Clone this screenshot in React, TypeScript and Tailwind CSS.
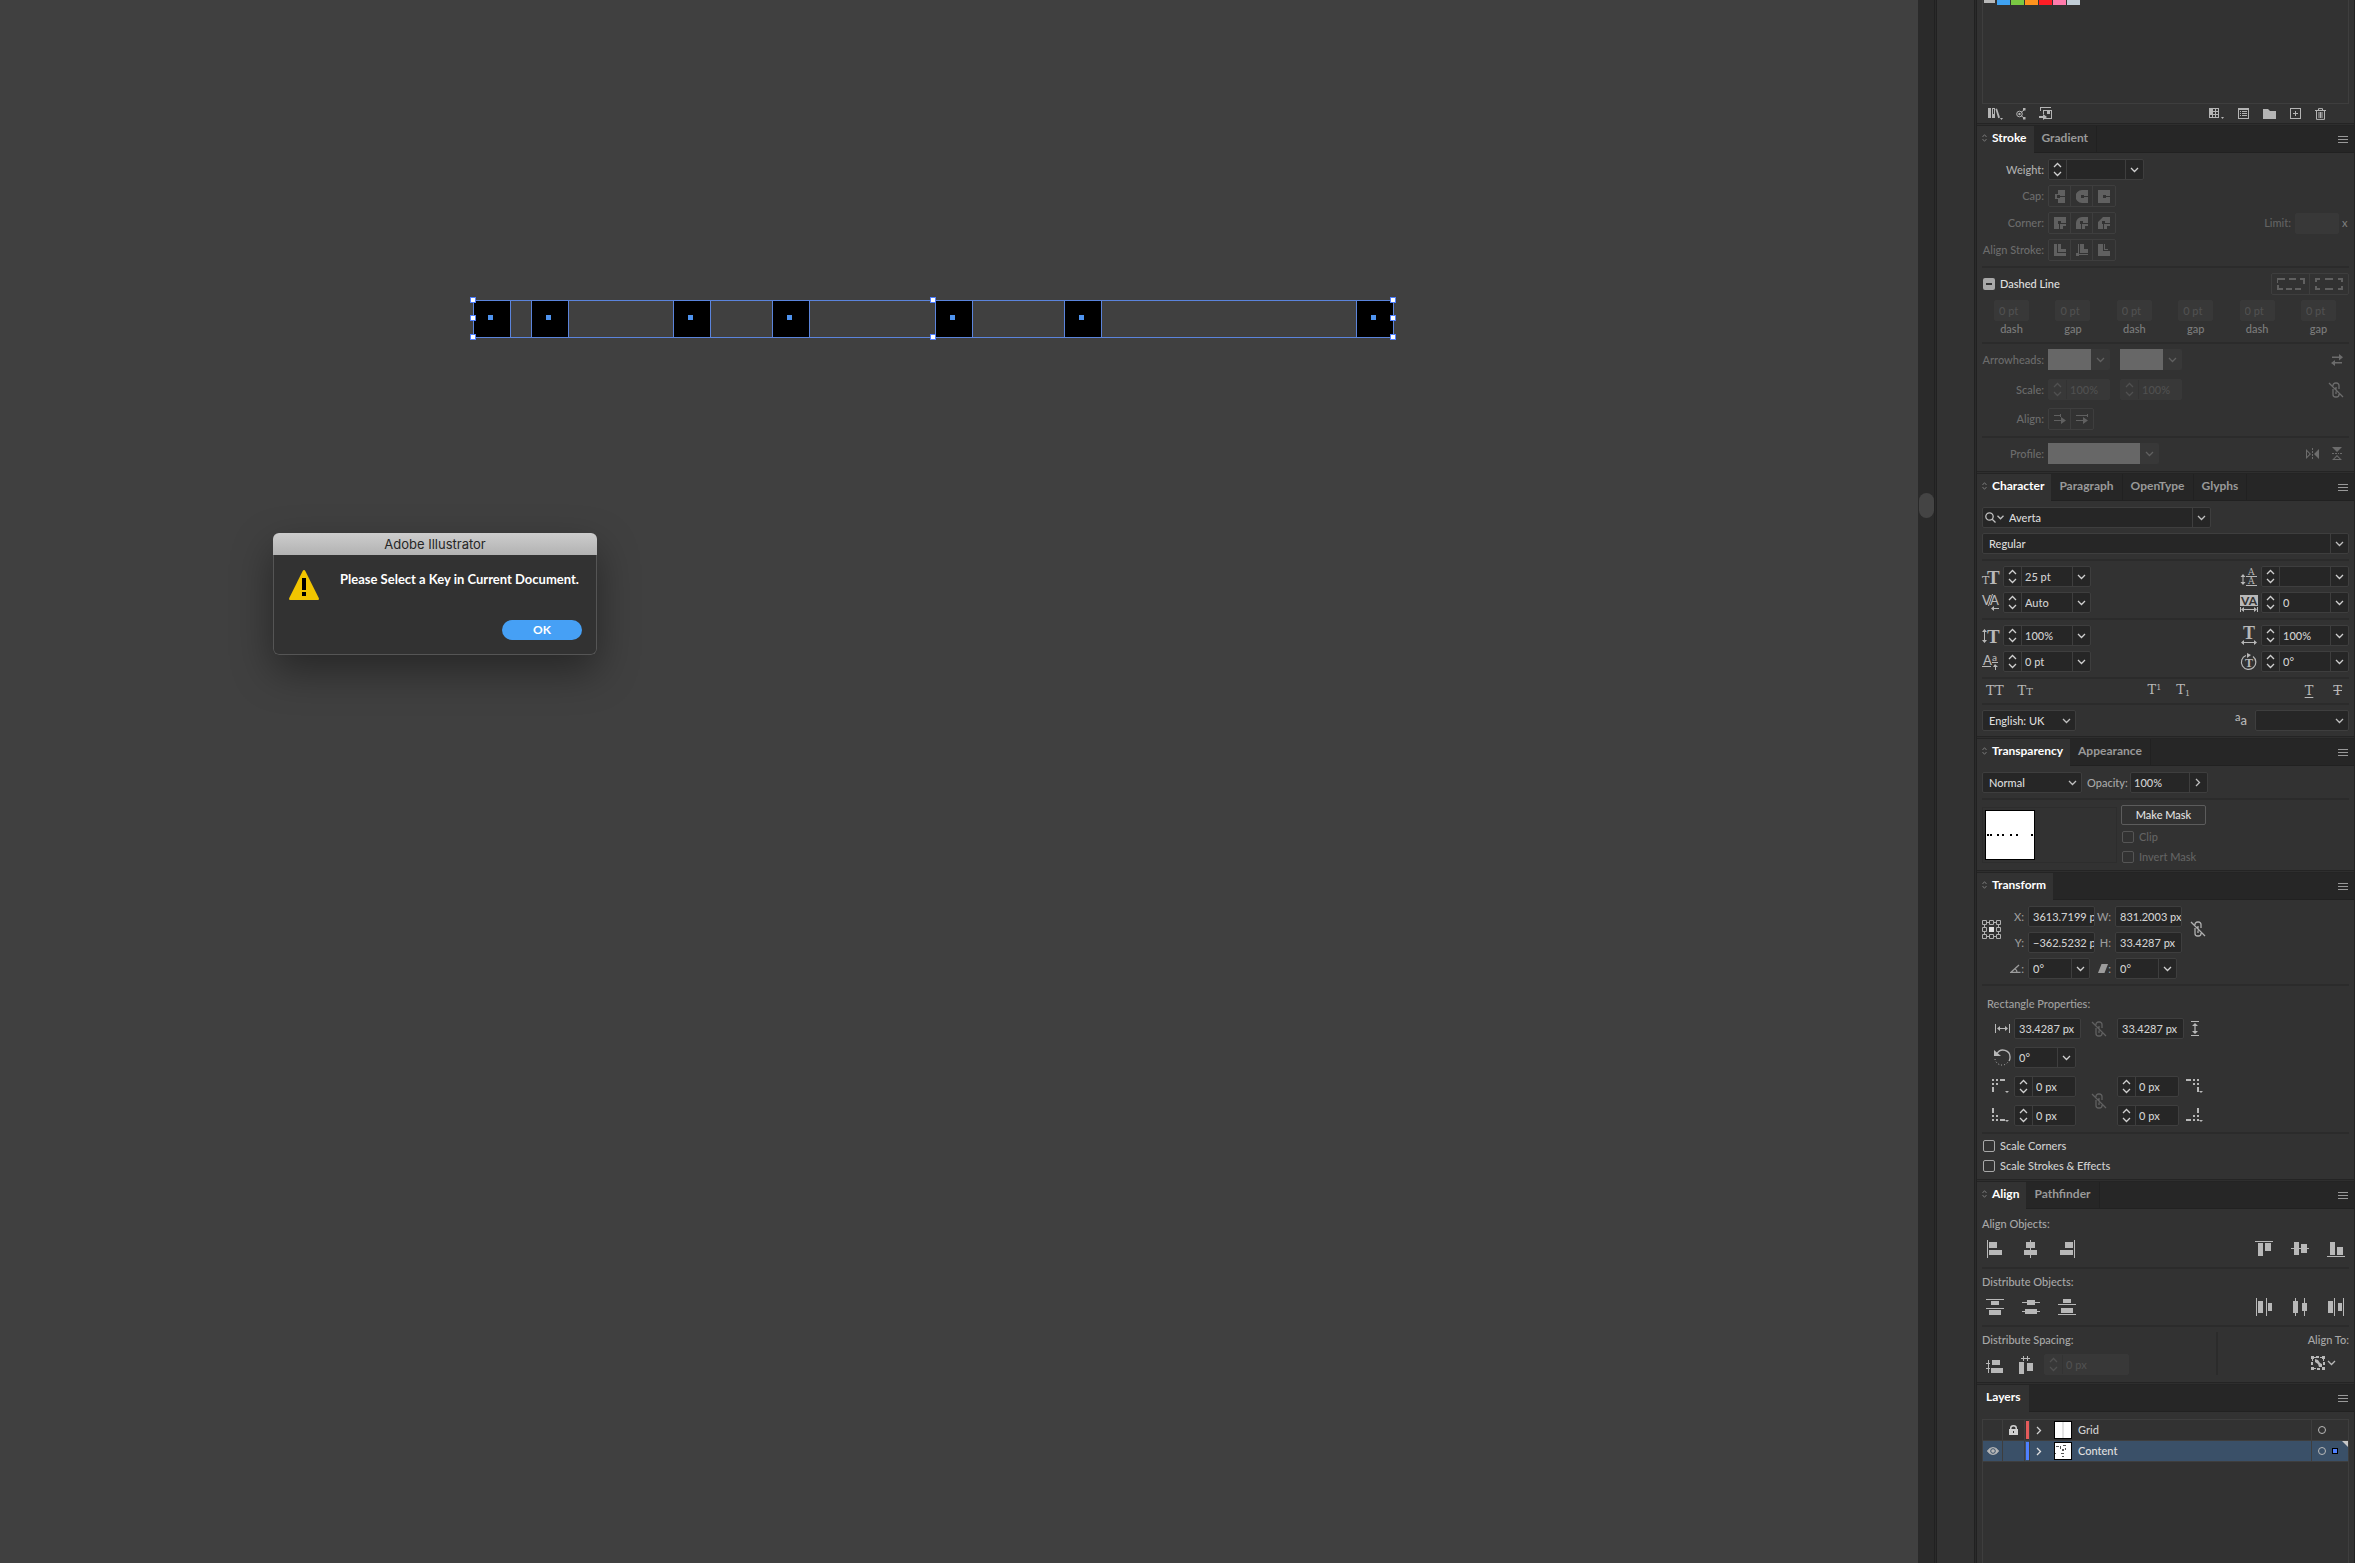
import React from 'react';
import clsx from 'clsx';

const keyPositions = [473, 531, 673, 772, 935, 1064, 1356];
const dotPositions = [488, 546, 688, 787, 950, 1079, 1371];
const handles = [
  [470, 297],
  [470, 315],
  [470, 334],
  [930, 297],
  [930, 334],
  [1390, 297],
  [1390, 315],
  [1390, 334],
];

function Shape({ w, h, d, className }: { w: number; h: number; d: string; className?: string }) {
  return (
    <svg width={w} height={h} viewBox={`0 0 ${w} ${h}`} className={clsx('shrink-0', className)} fill="currentColor">
      <path d={d} />
    </svg>
  );
}

function Line({ w, h, d, className }: { w: number; h: number; d: string; className?: string }) {
  return (
    <svg
      width={w}
      height={h}
      viewBox={`0 0 ${w} ${h}`}
      className={clsx('shrink-0', className)}
      fill="none"
      stroke="currentColor"
      strokeWidth="1.3"
    >
      <path d={d} />
    </svg>
  );
}

const ChevronDown = ({ className }: { className?: string }) => (
  <Line w={9} h={6} d="M1 1l3.5 3.5L8 1" className={className} />
);

function IconButton({ label, children, className }: { label: string; children: React.ReactNode; className?: string }) {
  return (
    <button aria-label={label} className={clsx('flex shrink-0 items-center justify-center', className)}>
      {children}
    </button>
  );
}

function Divider() {
  return <hr className="my-[5px] h-[2px] border-0 bg-[#2b2b2b]" />;
}

interface FieldProps {
  id?: string;
  label?: string;
  value?: string;
  width: string;
  stepper?: boolean;
  drop?: boolean;
  disabled?: boolean;
}

function Field({ id, label, value = '', width, stepper, drop, disabled }: FieldProps) {
  const line = disabled ? 'border-[#333333]' : 'border-[#3e3e3e]';
  return (
    <div
      className={clsx(
        'flex h-[21px] shrink-0 overflow-hidden rounded-xs border',
        width,
        disabled ? 'border-[#383838] bg-[#383838] text-[#505050]' : 'border-[#3e3e3e] bg-[#262626] text-[#d0d0d0]'
      )}
    >
      {stepper && (
        <div className={clsx('flex w-[18px] shrink-0 flex-col items-center justify-between border-r py-[2px]', line)}>
          <button aria-label="Increase" disabled={disabled}>
            <Line w={9} h={6} d="M1 5l3.5-3.5L8 5" className="block" />
          </button>
          <button aria-label="Decrease" disabled={disabled}>
            <ChevronDown className="block" />
          </button>
        </div>
      )}
      <input
        id={id}
        aria-label={label}
        defaultValue={value}
        disabled={disabled}
        className={clsx('min-w-0 flex-1 bg-transparent outline-none', stepper ? 'pl-[3px]' : 'pl-1')}
      />
      {drop && (
        <button
          aria-label="Show options"
          disabled={disabled}
          className={clsx('flex w-[18px] shrink-0 items-center justify-center border-l pr-px', line)}
        >
          <ChevronDown />
        </button>
      )}
    </div>
  );
}

function Select({ id, label, value, width, split }: { id?: string; label?: string; value: string; width: string; split?: boolean }) {
  return (
    <div className={clsx('relative flex h-[21px] shrink-0 rounded-xs border border-[#3e3e3e] bg-[#262626]', width)}>
      <select id={id} aria-label={label} className="w-full appearance-none bg-transparent pl-1.5 text-[#dcdcdc] outline-none">
        <option>{value}</option>
      </select>
      <span
        className={clsx(
          'pointer-events-none absolute inset-y-0 right-0 flex w-[18px] items-center justify-center',
          split && 'border-l border-[#3e3e3e]'
        )}
      >
        <ChevronDown />
      </span>
    </div>
  );
}

// Disabled preview menus: a flat swatch with a dim arrow beside it
function PreviewSelect({ id, label, width }: { id?: string; label?: string; width: string }) {
  return (
    <div className={clsx('relative h-[21px] shrink-0 rounded-xs bg-[#383838] pr-[19px] text-[#606060]', width)}>
      <select id={id} aria-label={label} disabled className="block h-full w-full appearance-none bg-[#676767]">
        <option></option>
      </select>
      <ChevronDown className="pointer-events-none absolute top-2 right-[5px]" />
    </div>
  );
}

function Checkbox({ id, label, disabled }: { id: string; label: string; disabled?: boolean }) {
  return (
    <label
      htmlFor={id}
      className={clsx('flex h-3 items-center gap-[5px] pl-px', disabled ? 'text-[#636363]' : 'text-[#d0d0d0]')}
    >
      <input
        id={id}
        type="checkbox"
        disabled={disabled}
        className={clsx('size-3 appearance-none rounded-xs border', disabled ? 'border-[#555555]' : 'border-[#a8a8a8]')}
      />
      {label}
    </label>
  );
}

function ButtonGroup({ items, dashed }: { items: { label: string; icon: React.ReactNode }[]; dashed?: boolean }) {
  return (
    <div className="flex h-[22px] divide-x divide-[#3e3e3e] rounded-xs border border-[#3e3e3e] text-[#606060]">
      {items.map(({ label, icon }) => (
        <IconButton key={label} label={label} className={dashed ? 'w-[38px]' : 'w-[22px]'}>
          {icon}
        </IconButton>
      ))}
    </div>
  );
}

interface PanelProps {
  tabs: string[];
  collapsible?: boolean;
  className?: string;
  children: React.ReactNode;
}

function Panel({ tabs, collapsible = true, className, children }: PanelProps) {
  return (
    <section className="flex shrink-0 flex-col last:grow">
      <div className="h-[3px] border-y border-[#242424] bg-[#2e2e2e]" />
      <header className="flex h-[27px] bg-[#262626] text-[12px] font-bold">
        {tabs.map((tab, i) => (
          <button
            key={tab}
            className={clsx(
              'flex items-center gap-[5px] pb-[3px]',
              i > 0
                ? 'border-r border-b border-[#212121] px-2 text-[#999999]'
                : clsx('bg-[#323232] text-white', collapsible ? 'pr-[7px] pl-[5px]' : 'px-[9px]')
            )}
          >
            {i === 0 && collapsible && (
              <svg width="5" height="8" viewBox="0 0 5 8" fill="none" stroke="#777" strokeWidth="1">
                <path d="M.5 3L2.5.7 4.5 3M.5 5l2 2.3L4.5 5" />
              </svg>
            )}
            {tab}
          </button>
        ))}
        <div className="flex grow items-center justify-end border-b border-[#212121] pr-[6px] text-[#999999]">
          <button aria-label={`${tabs[0]} panel menu`}>
            <Shape w={10} h={7} d="M0 0h10v1H0zM0 3h10v1H0zM0 6h10v1H0z" className="block" />
          </button>
        </div>
      </header>
      <div className={clsx('flex grow flex-col px-[5px]', className)}>{children}</div>
    </section>
  );
}

const BrokenLink = ({ className }: { className?: string }) => (
  <Line
    w={16}
    h={16}
    d="M1 1l14 14M5 4V3.5A2.5 2.5 0 0 1 7.500 1h1A2.500 2.500 0 0 1 11 3.500V7M5 7v5.500A2.500 2.500 0 0 0 7.500 15h1a2.500 2.500 0 0 0 2.500-2.500V12M8 5v2.500M8 9.500V12"
    className={className}
  />
);

function Swatches() {
  return (
    <section className="flex h-[123px] shrink-0 flex-col px-[5px]">
      <div className="flex h-[104px] gap-px border-x border-b border-[#3e3e3e] pl-px">
        <i className="h-[3px] w-[11px] bg-[#b8b8b8]" />
        <i className="ml-px h-[5px] w-[13px] bg-[#3fa2f2]" />
        <i className="h-[5px] w-[13px] bg-[#7ac943]" />
        <i className="h-[5px] w-[13px] bg-[#ff931e]" />
        <i className="h-[5px] w-[13px] bg-[#ff1d25]" />
        <i className="h-[5px] w-[13px] bg-[#ff7bac]" />
        <i className="h-[5px] w-[13px] bg-[#c0ccd6]" />
      </div>
      <div className="flex grow items-center justify-between pr-[23px] pl-[6px] text-[#b4b4b4]">
        <div className="flex gap-[13px]">
          <IconButton label="Swatch libraries">
            <Shape
              w={15}
              h={12}
              d="M0 0h3v10H0zM4 0h3v10H4zM5 1v5h1V1zM7.400 1L9 .4l3 9.200-1.800.6zM12 10h3l-1.500 2z"
              className="[fill-rule:evenodd]"
            />
          </IconButton>
          <IconButton label="Add to library">
            <svg width="10" height="12" viewBox="0 0 10 12" fill="none" stroke="currentColor">
              <circle cx="3.500" cy="6" r="2.800" />
              <circle cx="3.500" cy="6" r="1.200" fill="currentColor" stroke="none" />
              <path d="M5 4.500L8 2M5 7.500L8 10" />
              <path d="M7 0h2.500v2.500H7zM7 9h2.500v2.500H7z" fill="currentColor" stroke="none" />
            </svg>
          </IconButton>
          <IconButton label="Open theme">
            <Shape
              w={14}
              h={13}
              d="M1 0h11v1H2v3H1zM4 3h9v9H6v-1h6V4h-1v3H8V4H5v3H4zM0 9h4V7l4 3-4 3v-2H0z"
            />
          </IconButton>
        </div>
        <div className="flex items-center gap-[14px]">
          <IconButton label="Show swatch kinds">
            <Shape
              w={15}
              h={12}
              d="M0 0h10v10H0zM4 1v2h2V1zM7 1v2h2V1zM4 4v2h2V4zM7 4v2h2V4zM1 7v2h2V7zM4 7v2h2V7zM7 7v2h2V7zM12 9h3l-1.500 2z"
              className="[fill-rule:evenodd]"
            />
          </IconButton>
          <IconButton label="Swatch options">
            <Shape
              w={11}
              h={11}
              d="M0 0h11v11H0zM1 2v8h9V2zM2 3h1v1H2zM4 3h5v1H4zM2 5h1v1H2zM4 5h5v1H4zM2 7h1v1H2zM4 7h5v1H4z"
              className="[fill-rule:evenodd]"
            />
          </IconButton>
          <IconButton label="New colour group">
            <Shape w={13} h={10} d="M0 0h5l2 2h6v8H0z" />
          </IconButton>
          <IconButton label="New swatch">
            <Shape w={11} h={11} d="M0 0h11v11H0zM1 1v9h9V1zM5 3h1v2h2v1H6v2H5V6H3V5h2z" className="[fill-rule:evenodd]" />
          </IconButton>
          <IconButton label="Delete swatch">
            <Line w={11} h={12} d="M0 2.500h11M3.500 2V.6h4V2M1.500 3v8.400h8V3M4 4v6M5.500 4v6M7 4v6" className="stroke-1" />
          </IconButton>
        </div>
      </div>
    </section>
  );
}

const capIcons = [
  { label: 'Butt cap', icon: <Shape w={12} h={13} d="M4 0h7v6H6V5H3v3h3V7h5v6H4V9H1V4h3z" /> },
  { label: 'Round cap', icon: <Shape w={12} h={13} d="M6 0h6v6H8V5H5v3h3V7h4v6H6A6 6 0 0 1 6 0z" /> },
  { label: 'Projecting cap', icon: <Shape w={12} h={13} d="M0 0h12v6H8V5H5v3h3V7h4v6H0z" /> },
];

const cornerIcons = [
  { label: 'Miter join', icon: <Shape w={12} h={12} d="M0 0h12v6H7V4H4v3h1v5H0zM6 7h6v2H9v3H6z" /> },
  { label: 'Round join', icon: <Shape w={12} h={12} d="M6 0h6v6H7V4H4v3h1v5H0V6a6 6 0 0 1 6-6zM6 7h6v2H9v3H6z" /> },
  { label: 'Bevel join', icon: <Shape w={12} h={12} d="M5 0h7v6H7V4H4v3h1v5H0V5zM6 7h6v2H9v3H6z" /> },
];

const alignStrokeIcons = [
  { label: 'Align stroke to centre', icon: <Shape w={12} h={12} d="M0 0h3v9h9v3H0zM4 0h3v5h5v3H4z" /> },
  { label: 'Align stroke to inside', icon: <Shape w={12} h={12} d="M4 0h4v5h4v4H4zM2 0h1v10h9v1H3v1H0V9h2z" /> },
  { label: 'Align stroke to outside', icon: <Shape w={12} h={12} d="M0 0h5v7h7v5H0zM6 0h1v5h3v1H6z" /> },
];

const dashIcons = [
  { label: 'Preserve exact dash lengths', icon: <Shape w={28} h={12} d="M0 7h2v3h4v2H0zM1 0h7v2H1v3H0V0zM12 0h7v2h-7zM23 0h5v6h-2V2h-3zM9 10h6v2H9zM18 10h6v2h-6z" /> },
  { label: 'Align dashes to corners', icon: <Shape w={28} h={12} d="M0 0h5v2H2v2H0zM10 0h8v2h-8zM23 0h5v4h-2V2h-3zM0 8h2v2h3v2H0zM10 10h8v2h-8zM26 8h2v4h-5v-2h3z" /> },
];

const arrowAlignIcons = [
  { label: 'Extend arrow tip', icon: <Shape w={12} h={10} d="M0 1h6V0h1v3H6V2H0zM0 6h7V3l5 3.500L7 10V7H0z" /> },
  { label: 'Place arrow tip at end', icon: <Shape w={12} h={10} d="M0 1h11V0h1v3h-1V2H0zM0 6h7V3l5 3.500L7 10V7H0z" /> },
];

const strokeLabel = 'w-[66px] shrink-0 pr-1 text-right whitespace-nowrap text-[#6c6c6c]';

function StrokePanel() {
  return (
    <Panel tabs={['Stroke', 'Gradient']} className="pt-[6px] pb-[7px]">
      <div className="flex flex-col gap-[5px]">
        <div className="flex items-center">
          <label htmlFor="weight" className="w-[66px] shrink-0 pr-1 text-right text-[#b0b0b0]">Weight:</label>
          <Field id="weight" width="w-[96px]" stepper drop />
        </div>
        <div className="flex items-center">
          <span className={strokeLabel}>Cap:</span>
          <ButtonGroup items={capIcons} />
        </div>
        <div className="flex items-center">
          <span className={strokeLabel}>Corner:</span>
          <ButtonGroup items={cornerIcons} />
          <label htmlFor="limit" className="ml-auto pr-1 text-[#636363]">Limit:</label>
          <Field id="limit" width="w-[44px]" disabled />
          <span className="w-[10px] pl-[3px] text-[#7c7c7c]">x</span>
        </div>
        <div className="flex items-center">
          <span className={strokeLabel}>Align Stroke:</span>
          <ButtonGroup items={alignStrokeIcons} />
        </div>
      </div>
      <Divider />
      <div className="flex items-center justify-between">
        <label htmlFor="dashed" className="relative flex items-center gap-[5px] pl-px text-[#e0e0e0]">
          <input id="dashed" type="checkbox" className="size-3 appearance-none rounded-xs bg-[#a8a8a8]" />
          <i className="absolute left-1 h-[2px] w-[6px] bg-[#323232]" />
          Dashed Line
        </label>
        <ButtonGroup items={dashIcons} dashed />
      </div>
      <div className="mt-[5px] flex justify-between pr-[13px] pl-[12px]">
        {['dash', 'gap', 'dash', 'gap', 'dash', 'gap'].map((name, i) => (
          <div key={i} className="flex flex-col items-center">
            <Field id={`dash-${i}`} value="0 pt" width="w-[35px]" disabled />
            <label htmlFor={`dash-${i}`} className="leading-4 text-[#7c7c7c]">{name}</label>
          </div>
        ))}
      </div>
      <Divider />
      <div className="flex items-center text-[#6c6c6c]">
        <label htmlFor="arrow-start" className={strokeLabel}>Arrowheads:</label>
        <PreviewSelect id="arrow-start" width="w-[62px]" />
        <div className="w-[10px]" />
        <PreviewSelect label="Arrowhead end" width="w-[62px]" />
        <IconButton label="Swap arrowheads" className="mr-[6px] ml-auto">
          <Shape w={12} h={12} d="M1 2.500h7V0l4 3.200-4 3.300V4H1zM11 8H4V6L0 9l4 3v-2.500h7z" />
        </IconButton>
      </div>
      <div className="mt-[9px] flex items-center text-[#6c6c6c]">
        <label htmlFor="arrow-scale" className={strokeLabel}>Scale:</label>
        <Field id="arrow-scale" value="100%" width="w-[62px]" stepper disabled />
        <div className="w-[10px]" />
        <Field label="Arrowhead end scale" value="100%" width="w-[62px]" stepper disabled />
        <IconButton label="Link scales" className="mr-[5px] ml-auto">
          <BrokenLink />
        </IconButton>
      </div>
      <div className="mt-[8px] mb-px flex items-center">
        <span className={strokeLabel}>Align:</span>
        <ButtonGroup items={arrowAlignIcons} />
      </div>
      <Divider />
      <div className="flex items-center text-[#6c6c6c]">
        <label htmlFor="profile" className={strokeLabel}>Profile:</label>
        <PreviewSelect id="profile" width="w-[111px]" />
        <div className="mr-[7px] ml-auto flex items-center gap-[13px]">
          <IconButton label="Flip along">
            <Shape w={13} h={12} d="M0 1l5 5-5 5zM1 3.400v5.200L3.500 6zM13 1L8 6l5 5zM6 0h1v2H6zM6 3h1v2H6zM6 6h1v2H6zM6 9h1v2H6z" className="[fill-rule:evenodd]" />
          </IconButton>
          <IconButton label="Flip across">
            <Shape w={10} h={13} d="M0 0h10L5 5zM0 13l5-5 5 5zM2.400 12h5.200L5 9.500zM0 6h2v1H0zM3 6h2v1H3zM6 6h1v1H6zM8 6h2v1H8z" className="[fill-rule:evenodd]" />
          </IconButton>
        </div>
      </div>
    </Panel>
  );
}

function TypeIcon({ children }: { children: React.ReactNode }) {
  return (
    <svg
      width="18"
      height="18"
      viewBox="0 0 18 18"
      aria-hidden="true"
      className="shrink-0 overflow-visible font-['DejaVu_Serif',serif]"
      fill="#b8b8b8"
    >
      {children}
    </svg>
  );
}

function TypeRow({ left, right }: { left: React.ReactNode; right: React.ReactNode }) {
  return (
    <div className="flex justify-between">
      <div className="flex items-center gap-[3px]">{left}</div>
      <div className="flex items-center gap-[3px]">{right}</div>
    </div>
  );
}

const sans = { fontFamily: 'Lato, sans-serif' };
const slab = { fontFamily: 'DejaVu Serif, serif' };

function CharacterPanel() {
  return (
    <Panel tabs={['Character', 'Paragraph', 'OpenType', 'Glyphs']} className="pt-[6px] pb-[5px]">
      <div className="flex h-[21px] w-[229px] rounded-xs border border-[#3e3e3e] bg-[#262626]">
        <IconButton label="Search fonts" className="w-[22px] gap-px">
          <Line w={11} h={11} d="M4.500.8a3.700 3.700 0 1 0 0 7.400a3.700 3.700 0 0 0 0-7.400M7.200 7.200L10.500 10.500" />
          <Line w={7} h={5} d="M.5.8l3 3 3-3" />
        </IconButton>
        <input aria-label="Font family" defaultValue="Averta" className="min-w-0 flex-1 bg-transparent pl-1 text-[#dcdcdc] outline-none" />
        <IconButton label="Show fonts" className="w-[18px] border-l border-[#3e3e3e]">
          <ChevronDown />
        </IconButton>
      </div>
      <div className="mt-[5px] flex">
        <Select label="Font style" value="Regular" width="w-full" split />
      </div>
      <Divider />
      <div className="flex flex-col gap-[5px]">
        <TypeRow
          left={
            <>
              <TypeIcon>
                <text x="0" y="16" fontSize="11" style={slab}>T</text>
                <text x="5" y="16" fontSize="19" fontWeight="bold" fontFamily="Liberation Serif">T</text>
              </TypeIcon>
              <Field label="Font size" value="25 pt" width="w-[88px]" stepper drop />
            </>
          }
          right={
            <>
              <TypeIcon>
                <text x="8" y="7" fontSize="9" style={slab}>A</text>
                <text x="8" y="16" fontSize="9" style={slab}>A</text>
                <path d="M6 8h11v1H6zM6 17h11v1H6zM3 6l2.500 3h-2v5h2L3 17 .5 14h2V9h-2z" />
              </TypeIcon>
              <Field label="Leading" width="w-[88px]" stepper drop />
            </>
          }
        />
        <TypeRow
          left={
            <>
              <TypeIcon>
                <text x="0" y="11" fontSize="13" style={sans}>V</text>
                <text x="8" y="11" fontSize="13" style={sans}>A</text>
                <path d="M10 0h1L7 12H6zM9 14.500l3-2.500v2h5v1h-5v2z" />
              </TypeIcon>
              <Field label="Kerning" value="Auto" width="w-[88px]" stepper drop />
            </>
          }
          right={
            <>
              <TypeIcon>
                <path d="M0 1h18v11H0zM1 15.500l3-2.500v2h10v-2l3 2.500-3 2.500v-2H4v2zM0 13h1v5H0zM17 13h1v5h-1z" />
                <text x="1" y="11" fontSize="12" fontWeight="bold" fill="#323232" style={sans}>VA</text>
              </TypeIcon>
              <Field label="Tracking" value="0" width="w-[88px]" stepper drop />
            </>
          }
        />
      </div>
      <Divider />
      <div className="flex flex-col gap-[5px]">
        <TypeRow
          left={
            <>
              <TypeIcon>
                <path d="M2.500 2L5 5H3v8h2l-2.500 3L0 13h2V5H0z" />
                <text x="5" y="16" fontSize="19" fontWeight="bold" fontFamily="Liberation Serif">T</text>
              </TypeIcon>
              <Field label="Vertical scale" value="100%" width="w-[88px]" stepper drop />
            </>
          }
          right={
            <>
              <TypeIcon>
                <text x="3" y="12" fontSize="18" fontWeight="bold" fontFamily="Liberation Serif">T</text>
                <path d="M1 15.500l3-2.500v2h10v-2l3 2.500-3 2.500v-2H4v2z" />
              </TypeIcon>
              <Field label="Horizontal scale" value="100%" width="w-[88px]" stepper drop />
            </>
          }
        />
        <TypeRow
          left={
            <>
              <TypeIcon>
                <text x="1" y="12" fontSize="13" style={sans}>A</text>
                <text x="10" y="8" fontSize="10" style={sans}>a</text>
                <path d="M0 13h9v1H0zM10 9h6v1h-6zM13 11l3 3h-2v3h-1v-3h-2z" />
              </TypeIcon>
              <Field label="Baseline shift" value="0 pt" width="w-[88px]" stepper drop />
            </>
          }
          right={
            <>
              <TypeIcon>
                <path d="M6 2.500A7.200 7.200 0 1 0 13 3.500" fill="none" stroke="#b8b8b8" strokeWidth="1.200" />
                <path d="M7 0l4 2-4 3z" />
                <text x="5" y="14" fontSize="12" fontWeight="bold" fontFamily="Liberation Serif">T</text>
              </TypeIcon>
              <Field label="Character rotation" value="0°" width="w-[88px]" stepper drop />
            </>
          }
        />
      </div>
      <Divider />
      <div className="flex h-[14px] items-center justify-between pr-[7px] pl-1 font-['DejaVu_Serif',serif] text-[13px] leading-[14px] text-[#b8b8b8]">
        <div className="flex gap-[14px]">
          <button>TT</button>
          <button>T<span className="text-[10px]">T</span></button>
        </div>
        <div className="flex gap-[15px]">
          <button>T<span className="relative -top-1 text-[8px]">1</span></button>
          <button>T<span className="relative top-0.5 text-[8px]">1</span></button>
        </div>
        <div className="flex gap-[20px]">
          <button className="underline underline-offset-2">T</button>
          <button className="line-through">T</button>
        </div>
      </div>
      <Divider />
      <div className="flex items-center justify-between">
        <Select label="Language" value="English: UK" width="w-[94px]" />
        <div className="flex items-center gap-[8px]">
          <label htmlFor="antialias" className="text-[13px] leading-4 text-[#b8b8b8]">
            <span className="relative -top-1 text-[11px]">a</span>a
          </label>
          <Select id="antialias" value="" width="w-[94px]" />
        </div>
      </div>
    </Panel>
  );
}

function TransparencyPanel() {
  return (
    <Panel tabs={['Transparency', 'Appearance']} className="pt-[6px] pb-[7px]">
      <div className="flex items-center">
        <Select label="Blending mode" value="Normal" width="w-[100px]" />
        <label htmlFor="opacity" className="w-[48px] pl-[5px] text-[#a8a8a8]">Opacity:</label>
        <div className="flex h-[21px] w-[78px] rounded-xs border border-[#3e3e3e] bg-[#262626]">
          <input id="opacity" defaultValue="100%" className="min-w-0 flex-1 bg-transparent pl-[3px] text-[#d0d0d0] outline-none" />
          <IconButton label="Opacity slider" className="w-[18px] border-l border-[#3e3e3e] pr-px">
            <Line w={6} h={9} d="M1 1l3.500 3.500L1 8" />
          </IconButton>
        </div>
      </div>
      <Divider />
      <div className="flex items-start">
        <div className="mt-[2px] h-[56px] w-[135px] border border-[#2d2d2d] p-[2px]">
          <svg width="50" height="50" viewBox="0 0 50 50">
            <rect x=".5" y=".5" width="49" height="49" fill="white" stroke="black" />
            <path d="M2 24h2v2H2zM5 24h2v2H5zM12 24h2v2h-2zM17 24h2v2h-2zM25 24h2v2h-2zM31 24h2v2h-2zM46 24h2v2h-2z" />
          </svg>
        </div>
        <div className="ml-1 flex flex-col">
          <button className="h-[20px] w-[85px] rounded-xs border border-[#5c5c5c] text-[#e0e0e0]">Make Mask</button>
          <div className="mt-[6px] flex flex-col gap-2">
            <Checkbox id="clip" label="Clip" disabled />
            <Checkbox id="invert-mask" label="Invert Mask" disabled />
          </div>
        </div>
      </div>
    </Panel>
  );
}

const cornerDots = 'M0 0h2v2H0zM4 0h2v2H4zM8 0h5v2H8zM0 4h2v2H0zM4 4h2v2H4zM0 8h2v5H0z';

function CornerIcon({ flip, className }: { flip: string; className?: string }) {
  return (
    <svg width="17" height="15" viewBox="0 0 17 15" fill="#b8b8b8" className={clsx('self-center', className)}>
      <path d={cornerDots} transform={flip} />
      <path d="M13 12h4l-2 2z" />
    </svg>
  );
}

function TransformPanel() {
  return (
    <Panel tabs={['Transform']} className="pt-[6px] pb-[7px]">
      <div className="flex">
        <svg width="19" height="19" viewBox="0 0 19 19" fill="none" stroke="#b0b0b0" className="mt-[14px] shrink-0">
          <path d="M.5.5h4v4h-4zM7.500.5h4v4h-4zM14.500.5h4v4h-4zM.5 7.500h4v4h-4zM14.500 7.500h4v4h-4zM.5 14.500h4v4h-4zM7.500 14.500h4v4h-4zM14.500 14.500h4v4h-4zM5 2.500h2M12 2.500h2M5 16.500h2M12 16.500h2M2.500 5v2M2.500 12v2M16.500 5v2M16.500 12v2" />
          <path d="M7 7h5v5H7z" fill="#e0e0e0" stroke="none" />
        </svg>
        <div className="grid grid-cols-[27px_67px_20px_67px] items-center gap-y-[5px] text-[#9c9c9c]">
          <label htmlFor="pos-x" className="pr-1 text-right">X:</label>
          <Field id="pos-x" value="3613.7199 px" width="w-[67px]" />
          <label htmlFor="size-w" className="pr-1 text-right">W:</label>
          <Field id="size-w" value="831.2003 px" width="w-[67px]" />
          <label htmlFor="pos-y" className="pr-1 text-right">Y:</label>
          <Field id="pos-y" value="−362.5232 px" width="w-[67px]" />
          <label htmlFor="size-h" className="pr-1 text-right">H:</label>
          <Field id="size-h" value="33.4287 px" width="w-[67px]" />
          <label htmlFor="rotate" aria-label="Rotate" className="flex items-center justify-end pr-1">
            <Line w={11} h={9} d="M10.500 8.300H1L9 1M5 5c1.500.8 2 2 2 3.300" />:
          </label>
          <Field id="rotate" value="0°" width="w-[62px]" drop />
          <label htmlFor="shear" aria-label="Shear" className="flex items-center justify-end pr-1">
            <Shape w={10} h={9} d="M3.500 0H10L6.500 9H0z" />:
          </label>
          <Field id="shear" value="0°" width="w-[62px]" drop />
        </div>
        <IconButton label="Constrain proportions" className="mt-[15px] ml-[8px] h-4 text-[#b0b0b0]">
          <BrokenLink />
        </IconButton>
      </div>
      <Divider />
      <h3 className="mt-[5px] mb-[6px] pl-[5px] leading-4 text-[#a0a0a0]">Rectangle Properties:</h3>
      <div className="grid grid-cols-[32px_67px_36px_67px_20px] items-center gap-y-2 pb-px text-[#b8b8b8]">
        <Shape w={15} h={9} d="M0 0h1v9H0zM14 0h1v9h-1zM2 4.500L5 2v2h5V2l3 2.500L10 7V5H5v2z" className="ml-[13px]" />
        <Field label="Rectangle width" value="33.4287 px" width="w-[67px]" />
        <IconButton label="Constrain rectangle" className="text-[#606060]">
          <BrokenLink />
        </IconButton>
        <Field label="Rectangle height" value="33.4287 px" width="w-[67px]" />
        <Shape w={8} h={15} d="M0 0h8v1H0zM0 14h8v1H0zM4 2l3 3H4.600v5H7l-3 3-3-3h2.400V5H1z" className="ml-[7px]" />

        <svg width="17" height="17" viewBox="0 0 17 17" fill="none" stroke="#b8b8b8" className="ml-[12px]">
          <path d="M3 4.500A7 7 0 0 1 16 8.500a6 6 0 0 1-1 3.500" strokeWidth="1.300" />
          <path d="M1 10a7.200 7.200 0 0 0 13 3" strokeDasharray="1 2" />
          <path d="M0 1v6h7z" fill="#b8b8b8" stroke="none" />
        </svg>
        <Field label="Rectangle angle" value="0°" width="w-[62px]" drop />
        <span className="col-span-3" />

        <CornerIcon flip="" className="ml-[10px]" />
        <Field label="Top left radius" value="0 px" width="w-[62px]" stepper />
        <IconButton label="Link corner radii" className="row-span-2 text-[#606060]">
          <BrokenLink />
        </IconButton>
        <Field label="Top right radius" value="0 px" width="w-[62px]" stepper />
        <CornerIcon flip="matrix(-1 0 0 1 13 0)" className="ml-[2px]" />

        <CornerIcon flip="matrix(1 0 0 -1 0 13)" className="ml-[10px]" />
        <Field label="Bottom left radius" value="0 px" width="w-[62px]" stepper />
        <Field label="Bottom right radius" value="0 px" width="w-[62px]" stepper />
        <CornerIcon flip="matrix(-1 0 0 -1 13 13)" className="ml-[2px]" />
      </div>
      <Divider />
      <div className="mt-px flex flex-col gap-2">
        <Checkbox id="scale-corners" label="Scale Corners" />
        <Checkbox id="scale-strokes" label="Scale Strokes & Effects" />
      </div>
    </Panel>
  );
}

const alignLeftGroup = [
  { label: 'Horizontal align left', d: 'M1 0h1v18H1zM3 2h8v6H3zM3 10h13v5H3z' },
  { label: 'Horizontal align center', d: 'M8 0h1v2h4v6H9v2h6v5H9v3H8v-3H2v-5h6V8H4V2h4z' },
  { label: 'Horizontal align right', d: 'M16 0h1v18h-1zM7 2h8v6H7zM2 10h13v5H2z' },
];
const alignRightGroup = [
  { label: 'Vertical align top', d: 'M0 1h18v1H0zM3 3h5v13H3zM10 3h6v8h-6z' },
  { label: 'Vertical align center', d: 'M0 8h3V2h5v6h2V4h6v4h2v1h-2v4h-6V9H8v6H3V9H0z' },
  { label: 'Vertical align bottom', d: 'M0 16h18v1H0zM3 2h5v13H3zM10 7h6v8h-6z' },
];
const distributeLeftGroup = [
  { label: 'Vertical distribute top', d: 'M0 1h18v1H0zM5 3h8v4H5zM0 10h18v1H0zM3 12h12v5H3z' },
  { label: 'Vertical distribute center', d: 'M0 4h5V2h8v2h5v1h-5v2H5V5H0zM0 13h3v-2h12v2h3v1h-3v2H3v-2H0z' },
  { label: 'Vertical distribute bottom', d: 'M0 6h18v1H0zM5 1h8v4H5zM0 16h18v1H0zM3 10h12v5H3z' },
];
const distributeRightGroup = [
  { label: 'Horizontal distribute left', d: 'M1 0h1v18H1zM3 3h5v12H3zM11 0h1v18h-1zM13 5h4v8h-4z' },
  { label: 'Horizontal distribute center', d: 'M4 0h1v3h2v12H5v3H4v-3H2V3h2zM13 0h1v5h2v8h-2v5h-1v-5h-2V5h2z' },
  { label: 'Horizontal distribute right', d: 'M7 0h1v18H7zM1 3h5v12H1zM16 0h1v18h-1zM11 5h4v8h-4z' },
];

function AlignRow({ left, right }: { left: typeof alignLeftGroup; right: typeof alignLeftGroup }) {
  return (
    <div className="mt-2 mb-1 flex justify-between px-1 text-[#b8b8b8]">
      {[left, right].map((group, i) => (
        <div key={i} className="flex gap-[18px]">
          {group.map(({ label, d }) => (
            <IconButton key={label} label={label}>
              <Shape w={18} h={18} d={d} />
            </IconButton>
          ))}
        </div>
      ))}
    </div>
  );
}

function AlignPanel() {
  return (
    <Panel tabs={['Align', 'Pathfinder']} className="pt-[7px] pb-[7px] text-[#a8a8a8]">
      <h3 className="leading-4">Align Objects:</h3>
      <AlignRow left={alignLeftGroup} right={alignRightGroup} />
      <Divider />
      <h3 className="leading-4">Distribute Objects:</h3>
      <AlignRow left={distributeLeftGroup} right={distributeRightGroup} />
      <Divider />
      <div className="flex">
        <div className="w-[234px]">
          <h3 className="leading-4">Distribute Spacing:</h3>
          <div className="mt-[6px] flex items-center pl-1 text-[#b8b8b8]">
            <IconButton label="Vertical distribute space">
              <Shape w={18} h={18} d="M6 4h8v5H6zM5 12h12v5H5zM2 4h1v3h1v1H3v4h1v1H3v4H2v-4H0v-1h2V8H0V7h2z" />
            </IconButton>
            <IconButton label="Horizontal distribute space" className="ml-[14px]">
              <Shape w={18} h={18} d="M1 6h5v12H1zM9 7h6v8H9zM3 2h2V0h1v2h3V0h1v2h2v1h-2v2H9V3H6v2H5V3H3z" />
            </IconButton>
            <div className="w-[8px]" />
            <Field label="Spacing" value="0 px" width="w-[85px]" stepper disabled />
          </div>
        </div>
        <div className="flex grow flex-col items-end border-l-2 border-[#2b2b2b]">
          <h3 className="leading-4">Align To:</h3>
          <IconButton label="Align to selection" className="mt-[8px] mr-[13px] gap-[2px] text-[#b8b8b8]">
            <Shape
              w={14}
              h={14}
              d="M0 0h3v3H0zM5 0h3v2H5zM11 0h3v3h-3zM0 6h2v3H0zM12 6h2v3h-2zM0 11h3v3H0zM6 12h3v2H6zM11 11h3v3h-3zM3 1h2v1H3zM9 1h2v1H9zM3 12h2v1H3zM1 3h1v2H1zM12 3h1v2h-1zM4 3l3 1 2 3 2 1v3H8L7 8 4 6z"
            />
            <ChevronDown />
          </IconButton>
        </div>
      </div>
    </Panel>
  );
}

function LayersPanel() {
  const cell = 'border-r border-[#3e3e3e]';
  return (
    <Panel tabs={['Layers']} collapsible={false} className="pt-[7px]">
      <div className="grow border-x border-t border-[#3e3e3e]">
        <div className="flex h-[21px] items-stretch border-b border-[#3e3e3e] text-[#d0d0d0]">
          <div className={clsx('w-[20px]', cell)} />
          <button aria-label="Unlock Grid" className={clsx('flex w-[22px] items-center justify-center', cell)}>
            <Shape w={9} h={10} d="M0 4h1V3a3.500 3 0 0 1 7 0v1h1v6H0zM2.500 4h4V3a2 1.600 0 0 0-4 0zM4 6v2h1V6z" className="[fill-rule:evenodd]" />
          </button>
          <div className={clsx('w-[5px] py-px pl-px', cell)}>
            <i className="block h-full w-[3px] bg-[#e35b5b]" />
          </div>
          <IconButton label="Expand Grid" className="w-[18px]">
            <Line w={6} h={9} d="M1 1l3.500 3.500L1 8" />
          </IconButton>
          <svg width="18" height="18" viewBox="0 0 18 18" className="ml-[6px] self-center">
            <rect x=".5" y=".5" width="17" height="17" fill="white" stroke="black" />
            <path d="M8 1h2v16H8z" fill="#e4e4e4" />
          </svg>
          <span className="grow self-center pl-[6px]">Grid</span>
          <div className="flex w-[37px] items-center border-l border-[#3e3e3e] pl-[6px]">
            <i className="size-[8px] rounded-full border border-[#b8b8b8]" />
          </div>
        </div>
        <div className="flex h-[21px] items-stretch border-b border-[#3e3e3e] bg-[#3a5068] text-[#e0e0e0]">
          <button aria-label="Hide Content" className={clsx('flex w-[20px] items-center justify-center', cell)}>
            <svg width="12" height="8" viewBox="0 0 12 8" fill="none" stroke="#b8b8b8">
              <path d="M.5 4C3-.5 9-.5 11.500 4 9 8.500 3 8.500.5 4z" fill="#b8b8b8" />
              <circle cx="6" cy="4" r="2.300" stroke="#3a5068" fill="#b8b8b8" />
            </svg>
          </button>
          <div className={clsx('w-[22px]', cell)} />
          <div className={clsx('w-[5px] py-px pl-px', cell)}>
            <i className="block h-full w-[3px] bg-[#4f80ff]" />
          </div>
          <IconButton label="Expand Content" className="w-[18px]">
            <Line w={6} h={9} d="M1 1l3.500 3.500L1 8" />
          </IconButton>
          <svg width="18" height="18" viewBox="0 0 18 18" className="ml-[6px] self-center">
            <rect x=".5" y=".5" width="17" height="17" fill="white" stroke="black" />
            <path d="M2 4h3v1H2zM6 4h1v3H6zM9 3h3v1H9zM8 7h2v2H8zM11 6h1v2h-1zM1 11h1v1H1zM7 11h3v1H7zM8 14h2v1H8z" fill="#555" />
          </svg>
          <span className="grow self-center pl-[6px]">Content</span>
          <div className="relative flex w-[37px] items-center gap-[6px] border-l border-[#3e3e3e] pl-[6px]">
            <i className="size-[8px] rounded-full border border-[#b8b8b8]" />
            <i className="size-[6px] border border-black bg-[#4f80ff]" />
            <Shape w={6} h={6} d="M0 0h6v6z" className="absolute top-0 right-0 text-[#c8c8c8]" />
          </div>
        </div>
      </div>
    </Panel>
  );
}

function Selection() {
  return (
    <svg className="absolute top-[297px] left-[470px]" width="926" height="43" viewBox="470 297 926 43">
      {keyPositions.map((x) => (
        <rect key={x} x={x + 0.5} y="300.500" width="37" height="37" fill="black" stroke="#5b84dc" />
      ))}
      <rect x="473.500" y="300.500" width="920" height="37" fill="none" stroke="#5b84dc" />
      {dotPositions.map((x) => (
        <rect key={x} x={x} y="315" width="5" height="5" fill="#4f94f0" />
      ))}
      {handles.map(([x, y]) => (
        <rect key={`${x}-${y}`} x={x + 0.5} y={y + 0.5} width="5" height="5" fill="white" stroke="#4f80ff" />
      ))}
    </svg>
  );
}

function AlertDialog() {
  return (
    <div
      role="alertdialog"
      aria-labelledby="alert-title"
      className="absolute top-[533px] left-[273px] w-[324px] overflow-hidden rounded-md bg-[#323232] shadow-[0_16px_40px_rgba(0,0,0,0.4)]"
    >
      <h2
        id="alert-title"
        className="h-[22px] bg-linear-to-b from-[#cdcdcd] to-[#b2b2b2] text-center font-[Inter,sans-serif] text-[13px] leading-[23px] font-normal text-[#262626]"
      >
        Adobe Illustrator
      </h2>
      <div className="rounded-b-md border-x border-b border-[#555555] pt-[15px] pr-[14px] pb-[14px] pl-[15px]">
        <div className="flex gap-[21px]">
          <svg width="30" height="30" viewBox="0 0 30 30" className="shrink-0">
            <path d="M15 0q.8 0 1.300 1L30 28.500Q30 30 29 30H1Q0 30 0 28.500L13.700 1Q14.200 0 15 0z" fill="#f2c500" />
            <path d="M13 8h4v12h-4zM13 22h4v4h-4z" fill="black" />
          </svg>
          <p className="text-[13px] leading-[18px] font-bold whitespace-nowrap text-white">Please Select a Key in Current Document.</p>
        </div>
        <div className="mt-5 flex justify-end">
          <button className="h-5 w-20 rounded-full bg-[#46a0f5] text-[12px] font-bold text-white">OK</button>
        </div>
      </div>
    </div>
  );
}

export default function App() {
  return (
    <div className="flex min-h-screen bg-[#323232] font-[Lato,sans-serif] text-[11px] leading-[14px] font-medium text-[#c0c0c0]">
      <main className="relative grow overflow-hidden bg-[#404040]">
        <Selection />
        <AlertDialog />
      </main>
      <div className="w-4 shrink-0 bg-[#2a2a2a] pt-[493px]">
        <div className="ml-px h-[25px] rounded-full bg-[#444444]" />
      </div>
      <div className="w-[3px] shrink-0 border-x border-[#212121] bg-[#2a2a2a]" />
      <div className="w-[37px] shrink-0" />
      <div className="w-[3px] shrink-0 border-x border-[#212121] bg-[#2a2a2a]" />
      <aside className="flex w-[378px] shrink-0 flex-col border-r border-[#212121]">
        <Swatches />
        <StrokePanel />
        <CharacterPanel />
        <TransparencyPanel />
        <TransformPanel />
        <AlignPanel />
        <LayersPanel />
      </aside>
    </div>
  );
}
